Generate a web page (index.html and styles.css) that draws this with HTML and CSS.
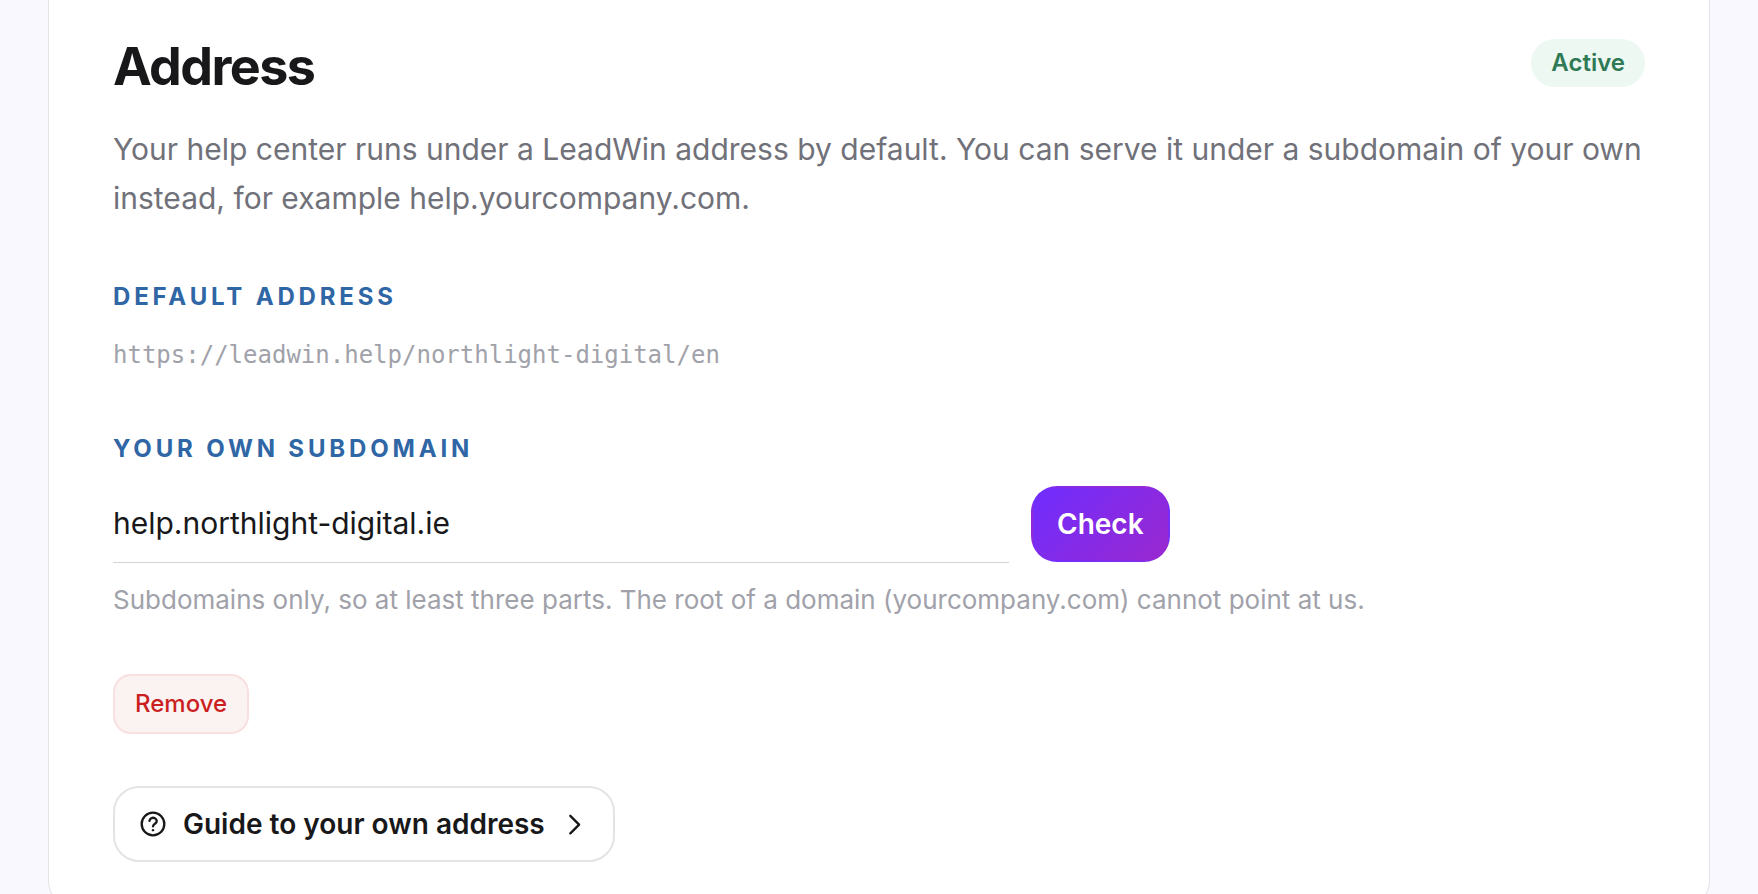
FILE: index.html
```html
<!DOCTYPE html>
<html lang="en">
<head>
<meta charset="utf-8">
<meta name="viewport" content="width=device-width, initial-scale=1">
<title>Address</title>
<link rel="stylesheet" href="styles.css">
</head>
<body>
<main class="card">
  <header class="card-header">
    <h1 class="title">Address</h1>
    <span class="badge">Active</span>
  </header>
  <p class="intro">Your help center runs under a LeadWin address by default. You can serve it under a subdomain of your own instead, for example help.yourcompany.com.</p>
  <section class="group">
    <h2 class="label">Default address</h2>
    <p class="url">https://leadwin.help/northlight-digital/en</p>
  </section>
  <form class="group">
    <label class="label" for="subdomain">Your own subdomain</label>
    <div class="field-row">
      <input class="field" id="subdomain" type="text" value="help.northlight-digital.ie" spellcheck="false">
      <button class="button button-primary" type="button">Check</button>
    </div>
    <p class="hint">Subdomains only, so at least three parts. The root of a domain (yourcompany.com) cannot point at us.</p>
  </form>
  <div class="actions">
    <button class="button button-danger" type="button">Remove</button>
    <a class="button button-guide" href="#guide">
      <svg class="icon-help" viewBox="0 0 24 24" aria-hidden="true"><circle cx="12" cy="12" r="9.700"/><path d="M9 9.300a3.100 2.700 0 1 1 4.900 2.300c-1.200.8-1.900 1.300-1.900 2.500"/><path d="M12 17.300h.01"/></svg>
      <span>Guide to your own address</span>
      <svg class="icon-chevron" viewBox="0 0 24 24" aria-hidden="true"><path d="m8 5 7.500 7.500L8 20"/></svg>
    </a>
  </div>
</main>
</body>
</html>
```
FILE: styles.css
```css
* {
  box-sizing: border-box;
}

html {
  overflow: hidden;
}

body {
  margin: 0;
  padding: 0 48px;
  background: #f9f8ff;
  color: #18181b;
  font-family: Inter, "Liberation Sans", sans-serif;
}

.card {
  padding: 36px 64px 46px;
  background: #fff;
  border: 1px solid #e4e4e7;
  border-top: 0;
  border-radius: 0 0 28px 28px;
}

.card-header {
  display: flex;
  justify-content: space-between;
  align-items: flex-start;
}

.title {
  margin: 0;
  font-size: 52px;
  line-height: 62px;
  font-weight: 700;
  letter-spacing: -0.03em;
}

.badge {
  margin-top: 3px;
  padding: 0 20px;
  border-radius: 24px;
  background: #edf8f2;
  color: #2f7a55;
  font-size: 24px;
  line-height: 48px;
  font-weight: 600;
}

.intro {
  margin: 27px 0 0;
  color: #71717a;
  font-size: 30px;
  line-height: 49px;
}

.group {
  margin-top: 56px;
}

.label {
  display: block;
  margin: 0;
  color: #2f66a5;
  font-size: 24px;
  line-height: 36px;
  font-weight: 700;
  letter-spacing: 0.16em;
  text-transform: uppercase;
}

.url {
  margin: 20px 0 0;
  color: #a1a1aa;
  font-family: Consolas, "DejaVu Sans Mono", monospace;
  font-size: 24px;
  line-height: 40px;
}

.field-row {
  display: flex;
  align-items: center;
  gap: 22px;
  margin-top: 17px;
}

.field {
  flex: 0 1 896px;
  min-width: 0;
  height: 79px;
  padding: 0;
  border: 0;
  border-bottom: 1px solid #d4d4d8;
  background: transparent;
  color: inherit;
  font: inherit;
  font-size: 30px;
}

.hint {
  margin: 17px 0 0;
  color: #a1a1aa;
  font-size: 26px;
  line-height: 40px;
}

.button {
  border: 2px solid transparent;
  font: inherit;
  font-size: 28px;
  font-weight: 600;
  line-height: 36px;
  text-decoration: none;
}

.button-primary {
  padding: 18px 24px;
  border-radius: 26px;
  background: linear-gradient(135deg, #6f2dff, #9a28cf);
  color: #fff;
}

.actions {
  display: flex;
  flex-direction: column;
  align-items: flex-start;
  gap: 52px;
  margin-top: 54px;
}

.button-danger {
  padding: 10px 20px;
  border-color: #f9e0e0;
  border-radius: 18px;
  background: #fbf2f2;
  color: #cb1f1f;
  font-size: 24px;
  font-weight: 500;
}

.button-guide {
  display: flex;
  align-items: center;
  padding: 18px 24px;
  border-color: #e4e4e7;
  border-radius: 26px;
  color: #18181b;
}

.icon-help,
.icon-chevron {
  width: 28px;
  height: 28px;
  fill: none;
  stroke: currentColor;
  stroke-width: 2;
  stroke-linecap: round;
  stroke-linejoin: round;
}

.icon-help {
  margin-right: 16px;
}

.icon-chevron {
  margin-left: 16px;
}
```
